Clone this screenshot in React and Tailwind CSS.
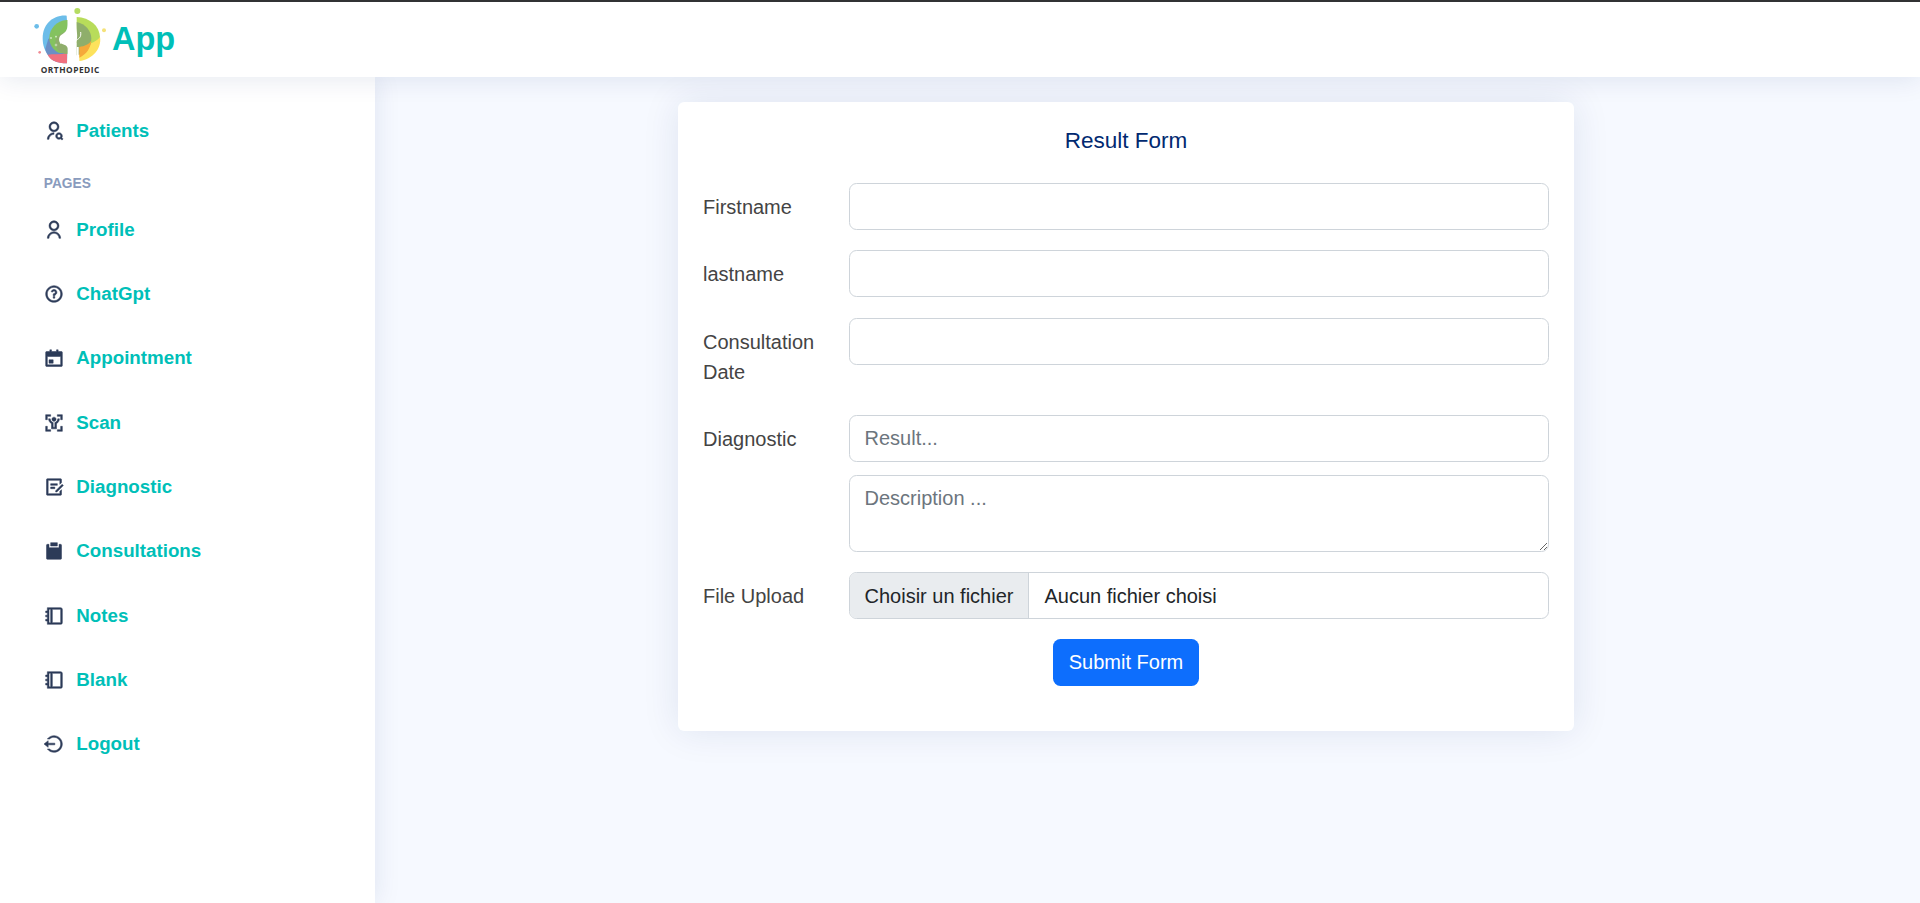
import {
  RiUserSearchLine,
  RiUserLine,
  RiQuestionLine,
  RiCalendarEventFill,
  RiBodyScanLine,
  RiDraftLine,
  RiClipboardFill,
  RiBookletLine,
  RiLogoutCircleLine,
} from 'react-icons/ri';

const pages = [
  { label: 'Profile', icon: RiUserLine },
  { label: 'ChatGpt', icon: RiQuestionLine },
  { label: 'Appointment', icon: RiCalendarEventFill },
  { label: 'Scan', icon: RiBodyScanLine },
  { label: 'Diagnostic', icon: RiDraftLine },
  { label: 'Consultations', icon: RiClipboardFill },
  { label: 'Notes', icon: RiBookletLine },
  { label: 'Blank', icon: RiBookletLine },
  { label: 'Logout', icon: RiLogoutCircleLine },
];

const fieldClass =
  'block h-[47px] w-full rounded-[7.5px] border-[1.25px] border-[#ced4da] bg-white px-[14.5px] text-[20px] text-[#212529] placeholder:text-[#6c757d] focus:outline-none';

function Logo() {
  return (
    <svg viewBox="30 0 240 225" className="h-[75px] w-[80px] shrink-0">
      <circle cx="50" cy="73" r="7" fill="#6cbde9" />
      <circle cx="172" cy="27" r="9" fill="#b5dc63" />
      <circle cx="252" cy="85" r="6" fill="#f5e27a" />
      <circle cx="59" cy="151" r="4" fill="#f08a94" />
      <path d="M140 41C98 38 68 68 68 108c0 22 6 38 16 50l60-60z" fill="#6cbde9" />
      <path d="M76 140c2 14 12 28 25 36 12 6 26 8 40 8l4-84-60 10z" fill="#6a8fc5" />
      <path d="M83 158c6 10 10 14 18 18 12 6 26 8 40 8v-30c-20 4-42 2-58 4z" fill="#f0707f" />
      <path d="M140 54c-30 2-52 26-52 54 0 20 12 38 30 45l25 1V54z" fill="#84c25f" />
      <path d="M143 88c-24 6-42 18-36 44 3 12 16 24 36 24z" fill="#8fae6b" />
      <path d="M170 45c40 2 68 26 70 60 0 10-4 20-14 28l-56-10z" fill="#b8dc5a" />
      <path d="M240 105c6 34-22 68-62 72v-42c24-6 50-14 62-30z" fill="#fde25c" />
      <path d="M170 60c26 6 44 26 44 50 0 26-18 44-44 50z" fill="#8fae6b" />
      <path d="M178 135c16-2 30-8 36-20-2 24-14 42-36 52z" fill="#f5a93a" />
      <path d="M143 38h25c0 22 0 38 2 50 2 10 2 18 0 26-2 8-2 14-2 26v40h-25v-40c0-12-15-12-23-18-6-8-2-22 8-26 12-6 15-18 15-32z" fill="#fff" />
      <path d="M120 124c16-12 34 4 50-10 8-6 14-8 12-24" fill="none" stroke="#fff" strokeWidth="3" />
      <path d="M170 180v-45h6v45z" fill="#fff" />
      <path d="M90 108h6M93 105v6M108 101v6M105 104h6M108 125v8M104 129h8" stroke="#fff" strokeWidth="1.5" />
      <text
        x="150"
        y="214"
        textAnchor="middle"
        fontSize="25"
        fontWeight="700"
        fill="#333333"
        textLength="176"
        style={{ fontFamily: '"Open Sans", sans-serif' }}
      >
        ORTHOPEDIC
      </text>
    </svg>
  );
}

function NavLink({ label, icon: Icon }) {
  return (
    <a href="#" className="flex h-[64.3px] items-center pl-[18.75px] text-[18.75px] font-bold text-[#00bfb8]">
      <Icon className="mr-[12.5px] size-[20px] shrink-0 stroke-current stroke-[0.6] text-[#2c3b58]" />
      {label}
    </a>
  );
}

function Row({ label, children, className = 'mb-[20.5px]' }) {
  return (
    <div className={`grid grid-cols-[146px_700px] ${className}`}>
      <label className="pt-[9.25px] pr-[20px] pb-[7.75px] text-[20px] leading-[30px] text-[#444444]">{label}</label>
      <div>{children}</div>
    </div>
  );
}

export default function App() {
  return (
    <div className="flex h-screen flex-col overflow-hidden bg-[#f6f9ff] font-['Liberation_Sans',Arial,sans-serif]">
      <div className="h-[1.5px] shrink-0 bg-[#333333]" />
      <header className="relative z-10 flex h-[75px] shrink-0 items-center bg-white pl-[30px] shadow-[0_2.5px_25px_rgba(1,41,112,0.1)]">
        <Logo />
        <span className="ml-[2px] text-[32.5px] font-bold text-[#00bfb8]">App</span>
      </header>
      <div className="flex min-h-0 flex-1">
        <aside className="w-[375px] shrink-0 bg-white pt-[22px] pl-[25px] shadow-[0_0_25px_rgba(1,41,112,0.1)]">
          <NavLink label="Patients" icon={RiUserSearchLine} />
          <div className="mt-[12px] mb-[3px] flex h-[20px] items-center pl-[18.75px] text-[13.75px] font-bold text-[#899bbd] uppercase">
            Pages
          </div>
          {pages.map((page) => (
            <NavLink key={page.label} {...page} />
          ))}
        </aside>
        <main className="flex-1 pt-[25px] pl-[303px]">
          <section className="w-[896px] rounded-[6.25px] bg-white px-[25px] pt-[25px] pb-[45px] shadow-[0_0_37.5px_rgba(1,41,112,0.1)]">
            <h5 className="mb-[29px] text-center text-[22.5px] leading-[27px] font-normal text-[#012970]">Result Form</h5>
            <form>
              <Row label="Firstname">
                <input type="text" className={fieldClass} />
              </Row>
              <Row label="lastname">
                <input type="text" className={fieldClass} />
              </Row>
              <Row label="Consultation Date">
                <input type="text" className={fieldClass} />
              </Row>
              <Row label="Diagnostic">
                <input type="text" placeholder="Result..." className={fieldClass} />
                <textarea
                  placeholder="Description ..."
                  className="mt-[13px] block h-[76.5px] w-full rounded-[7.5px] border-[1.25px] border-[#ced4da] bg-white px-[14.5px] py-[6.5px] text-[20px] leading-[30px] placeholder:text-[#6c757d] focus:outline-none"
                />
              </Row>
              <Row label="File Upload" className="mb-[19.5px]">
                <div className="flex h-[47px] items-center overflow-hidden rounded-[7.5px] border-[1.25px] border-[#ced4da] text-[20px] text-[#212529]">
                  <span className="flex h-full items-center border-r-[1.25px] border-[#ced4da] bg-[#e9ecef] px-[14.5px]">Choisir un fichier</span>
                  <span className="pl-[15.5px]">Aucun fichier choisi</span>
                </div>
              </Row>
              <div className="flex justify-center">
                <button type="button" className="h-[47px] rounded-[7.5px] bg-[#0d6efd] px-[16px] text-[20px] text-white">
                  Submit Form
                </button>
              </div>
            </form>
          </section>
        </main>
      </div>
    </div>
  );
}
